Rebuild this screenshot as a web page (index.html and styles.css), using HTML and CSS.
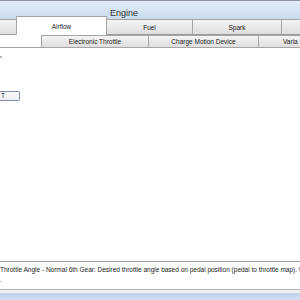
FILE: index.html
```html
<!DOCTYPE html>
<html lang="en">
<head>
  <meta charset="UTF-8">
  <title>Engine</title>
  <link rel="stylesheet" href="styles.css">
</head>
<body>
  <div class="window">
    <div class="header"><span class="title">Engine</span></div>
    <div class="tabs-main">
      <div class="tab tab-first"></div>
      <div class="tab tab-active tab-airflow">Airflow</div>
      <div class="tab tab-fuel">Fuel</div>
      <div class="tab tab-spark">Spark</div>
      <div class="tab tab-last"></div>
    </div>
    <div class="tabs-sub">
      <div class="tab-gap"></div>
      <div class="tab tab-etc">Electronic Throttle</div>
      <div class="tab tab-cmd">Charge Motion Device</div>
      <div class="tab tab-var">Varia</div>
    </div>
    <div class="content">
      <div class="mark"></div>
      <div class="field">T</div>
    </div>
    <div class="status">
      <div class="status-line">Throttle Angle - Normal 6th Gear: Desired throttle angle based on pedal position (pedal to throttle map). \</div>
      <div class="status-line">.</div>
    </div>
    <div class="footer"></div>
  </div>
</body>
</html>
```

FILE: styles.css
```css
body {
  margin: 0;
  font-family: "Liberation Sans", Arial, sans-serif;
  font-size: 6.5px;
  color: #1a1a1a;
  background: #fff;
}

.window {
  width: 300px;
  height: 300px;
  overflow: hidden;
  display: flex;
  flex-direction: column;
  border-top: 1px solid #8c939b;
  box-sizing: border-box;
}

.header {
  height: 18px;
  background: linear-gradient(#e2ecf7, #c9dcf0);
  display: flex;
  align-items: flex-end;
  padding-left: 110px;
  position: relative;
  z-index: 0;
}

.title {
  font-size: 9px;
  color: #333;
  padding-bottom: 1px;
}

.tabs-main {
  height: 16px;
  display: flex;
  background: #c9dcf0;
  border-bottom: 1px solid #9a9a9a;
  box-sizing: border-box;
}

.tab {
  box-sizing: border-box;
  display: flex;
  align-items: center;
  justify-content: center;
  background: linear-gradient(#f4f4f4, #dedede);
  border: 1px solid #a5a5a5;
  border-bottom: none;
  margin-right: -1px;
  white-space: nowrap;
}

.tab-first { width: 17px; border-left: none; }
.tab-airflow { width: 91px; }
.tab-fuel { width: 87px; }
.tab-spark { width: 90px; }
.tab-last { flex: 1; }

.tab-active {
  background: #fff;
  margin-top: -3px;
  height: 19px;
  position: relative;
  z-index: 1;
  padding-top: 1px;
}

.tabs-sub {
  height: 13px;
  display: flex;
  border-bottom: 1px solid #a5a5a5;
  box-sizing: border-box;
}

.tab-gap {
  width: 41px;
  background: #fff;
}

.tab-etc { width: 108px; }
.tab-cmd { width: 111px; }
.tab-var {
  flex: 1;
  justify-content: flex-start;
  padding-left: 24px;
}

.content {
  flex: 1;
  background: #fff;
  display: flex;
  flex-direction: column;
  align-items: flex-start;
}

.mark {
  width: 2px;
  height: 2px;
  background: #b8b8b8;
  margin-top: 8px;
}

.field {
  margin-top: 33px;
  width: 20px;
  height: 10px;
  box-sizing: border-box;
  border: 1px solid #7b8ab0;
  border-left: none;
  border-radius: 0 2px 2px 0;
  background: linear-gradient(#fbfbfd, #eceef4);
  line-height: 8px;
  padding-left: 1px;
}

.status {
  height: 28px;
  border-top: 1px solid #a0a0a0;
  background: #fff;
  padding-top: 3px;
  box-sizing: border-box;
}

.status-line {
  height: 10px;
  line-height: 10px;
  white-space: nowrap;
}

.footer {
  height: 10px;
  border-top: 1px solid #b4b4b4;
  background: linear-gradient(#f0f0f0 0, #f0f0f0 3px, #b9d1ec 3px, #d0e1f4);
}
```
